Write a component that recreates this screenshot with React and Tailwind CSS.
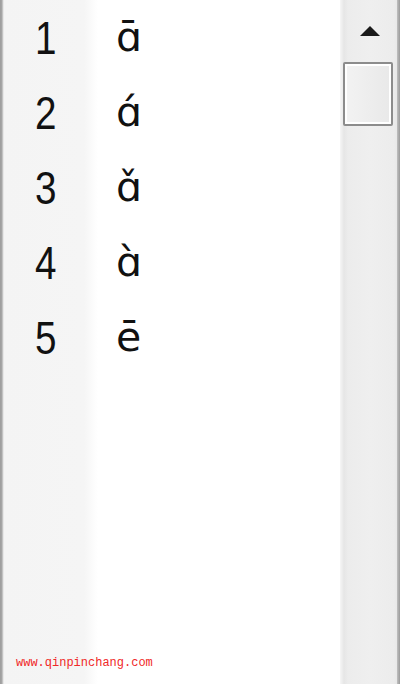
import React from "react";

const rows = [
  ["1", "\u0251\u0304"],
  ["2", "\u0251\u0301"],
  ["3", "\u0251\u030C"],
  ["4", "\u0251\u0300"],
  ["5", "e\u0304"],
];

export default function App() {
  return (
    <div className="flex h-[684px] w-[400px] overflow-hidden bg-white">
      <div className="w-[4px] h-full bg-[linear-gradient(to_right,#9c9c9c_0px,#a8a8a8_2px,#dcdcdc_3px,#f2f2f2_4px)]" />
      <div className="flex-1 h-full flex flex-col bg-[linear-gradient(to_right,#f4f4f4_0px,#f5f5f5_80px,#ffffff_94px)]">
        <div className="flex flex-col">
          {rows.map(([n, l]) => (
            <div key={n} className="flex h-[75px] items-center">
              <div className="w-[82px] pl-[31px]">
                <div className="text-[46px] leading-none text-[#111] font-['Liberation_Sans',sans-serif] scale-x-[0.84] origin-left">
                  {n}
                </div>
              </div>
              <div className="pl-[30px] text-[41px] leading-none text-[#111] font-['DejaVu_Sans',sans-serif]">
                {l}
              </div>
            </div>
          ))}
        </div>
        <div className="flex-1" />
        <div className="pl-[12px] pb-[15px] text-[12px] leading-none text-[#f02828] font-['Liberation_Mono',monospace]">
          www.qinpinchang.com
        </div>
      </div>
      <div className="w-[57px] h-full flex flex-col bg-[linear-gradient(to_right,#f6f6f6_0px,#e6e6e6_4px,#ececec_8px,#efefef_30px,#ececec_54px,#e8e8e8_57px)]">
        <div className="h-[62px] flex items-center justify-center pl-[2px]">
          <svg width="22" height="12" viewBox="0 0 22 12">
            <polygon points="11,1 21,11 1,11" fill="#1a1a1a" />
          </svg>
        </div>
        <div className="ml-[3px] w-[50px] h-[64px] border-2 border-[#8c8c8c] rounded-[2px] bg-white p-[2px]">
          <div className="w-full h-full bg-[linear-gradient(to_right,#f2f2f2,#e9e9e9)]" />
        </div>
      </div>
      <div className="w-[3px] h-full bg-[linear-gradient(to_right,#c0c0c0,#9a9a9a)]" />
    </div>
  );
}
